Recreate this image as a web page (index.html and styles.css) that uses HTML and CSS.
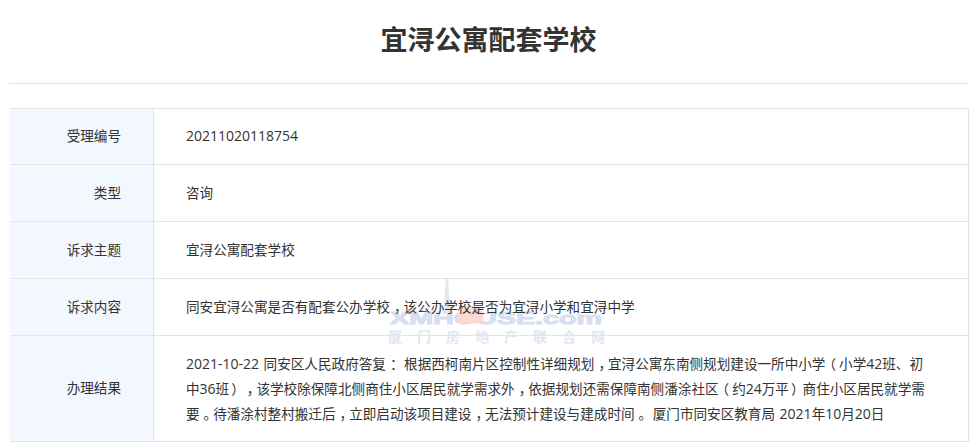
FILE: index.html
```html
<!DOCTYPE html>
<html lang="zh-CN">
<head>
<meta charset="utf-8">
<title>宜浔公寓配套学校</title>
<link rel="stylesheet" href="styles.css">
</head>
<body>
<div class="page">
  <h1 class="title">宜浔公寓配套学校</h1>
  <div class="sheet">
    <div class="mark">
      <svg class="mark-logo" viewBox="0 0 226 50" width="226" height="50" aria-hidden="true">
        <text x="5" y="47.500" class="mark-en" textLength="212" lengthAdjust="spacingAndGlyphs">XMHOUSE.com</text>
        <path d="M61 2 L63 2 L65 28 L67 38 L57 38 L59 28 Z" fill="#e2e8f2"/>
        <path d="M73.500 47.500 A13 13 0 1 1 97.500 47.500 Z" fill="#fbd8d1"/>
      </svg>
      <div class="mark-cn">厦门房地产联合网</div>
    </div>
    <div class="row r1"><div class="label">受理编号</div><div class="value"><span class="num">20211020118754</span></div></div>
    <div class="row r2"><div class="label">类型</div><div class="value">咨询</div></div>
    <div class="row r2"><div class="label">诉求主题</div><div class="value">宜浔公寓配套学校</div></div>
    <div class="row r2"><div class="label">诉求内容</div><div class="value">同安宜浔公寓是否有配套公办学校<span class="pn">，</span>该公办学校是否为宜浔小学和宜浔中学</div></div>
    <div class="row r3"><div class="label">办理结果</div><div class="value"><span class="num">2021-10-22</span> 同安区人民政府答复<span class="pn">：</span> 根据西柯南片区控制性详细规划<span class="pn">，</span>宜浔公寓东南侧规划建设一所中小学<span class="po">（</span>小学<span class="num">42</span>班、初中<span class="num">36</span>班<span class="pc">）</span><span class="pn">，</span>该学校除保障北侧商住小区居民就学需求外<span class="pn">，</span>依据规划还需保障南侧潘涂社区<span class="po">（</span>约<span class="num">24</span>万平<span class="pc">）</span>商住小区居民就学需要<span class="pn">。</span>待潘涂村整村搬迁后<span class="pn">，</span>立即启动该项目建设<span class="pn">，</span>无法预计建设与建成时间<span class="pn">。</span> 厦门市同安区教育局 <span class="num">2021</span>年<span class="num">10</span>月<span class="num">20</span>日</div></div>
  </div>
</div>
</body>
</html>
```
FILE: styles.css
```css
html, body { margin: 0; padding: 0; background: #fff; }
body { font-family: "Open Sans", "Noto Sans CJK SC", sans-serif; color: #333; overflow: hidden; }
.page { width: 976px; height: 442px; overflow: hidden; }
.title {
  margin: 0 8px 0 9px;
  height: 83px;
  line-height: 79px;
  font-size: 27px;
  font-weight: 700;
  text-align: center;
  color: #333;
  border-bottom: 1px solid #e4e4e4;
}
.sheet {
  position: relative;
  margin: 24px 7px 0 10px;
  border-top: 1px solid #e4e4e4;
  border-right: 1px solid #e4e4e4;
}
.row { position: relative; display: flex; border-bottom: 1px solid #e4e4e4; }
.r1 { height: 55px; }
.r2 { height: 56px; }
.r3 { height: 105px; }
.label {
  flex: 0 0 144px;
  box-sizing: border-box;
  padding: 0 32px 3px 0;
  border-right: 1px solid #e4e4e4;
  background: #f3f8fe;
  font-size: 13.6px;
  display: flex;
  align-items: center;
  justify-content: flex-end;
}
.value {
  flex: 1;
  padding: 0 37px 2px 32px;
  font-size: 13.6px;
  line-height: 25px;
  word-spacing: 1px;
  align-self: center;
}
.r3 .value { padding-bottom: 0; }
.num { font-size: 14px; }
.pn, .po, .pc { display: inline-block; }
.pn { transform: translateX(4px); }
.po { transform: translateX(-3px); }
.pc { transform: translateX(2px); }
.mark {
  position: absolute;
  left: 375px;
  top: 167px;
  width: 226px;
}
.mark-logo { display: block; }
.mark-en { font: 700 17px "Liberation Sans", sans-serif; fill: #d6e0f0; stroke: #d6e0f0; stroke-width: 1px; }
.mark-cn {
  margin: 2px 0 0 3px;
  font-size: 14px;
  font-weight: 700;
  letter-spacing: 15px;
  color: #e0e7f2;
  line-height: 18px;
  white-space: nowrap;
}
```
